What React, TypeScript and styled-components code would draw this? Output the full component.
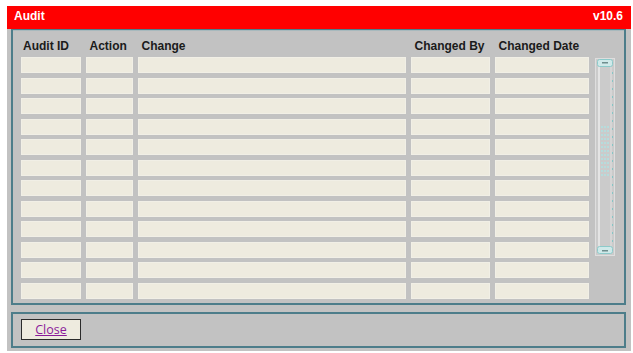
import styled, { createGlobalStyle } from 'styled-components';

const Global = createGlobalStyle`
  html, body {
    margin: 0;
    padding: 0;
    background: #ffffff;
  }
  body {
    padding: 6px 2px 0 7px;
    font-family: "Liberation Sans", Arial, sans-serif;
  }
`;

const Window = styled.div`
  width: 624px;
  height: 345px;
  background: #c2c2c2;
  display: flex;
  flex-direction: column;
`;

const TitleBar = styled.div`
  height: 23px;
  flex: none;
  background: #ff0000;
  color: #ffffff;
  font-weight: bold;
  font-size: 12px;
  display: flex;
  justify-content: space-between;
  align-items: flex-start;
  padding: 3px 8px 0 7px;
  box-sizing: border-box;
`;

const Body = styled.div`
  flex: 1;
  display: flex;
  flex-direction: column;
  gap: 7px;
  padding: 0 5px 3px 4px;
`;

const Panel = styled.div<{ $h: number; $flat?: boolean }>`
  height: ${({ $h }) => $h}px;
  box-sizing: border-box;
  border: 2px solid #4d7d8a;
  ${({ $flat }) =>
    $flat
      ? `border-top-width: 1px; box-shadow: inset 0 1px 0 #a7b9bd;`
      : ''}
  display: flex;
`;

const TableArea = styled.div`
  display: flex;
  gap: 6px;
  padding: 1px 0 0 8px;
`;

const Grid = styled.div`
  display: grid;
  grid-template-columns: 60px 47px 268px 79px 94px;
  grid-template-rows: 21.5px repeat(12, 16px);
  column-gap: 5px;
  row-gap: 4.5px;
`;

const Head = styled.div<{ $first?: boolean }>`
  font-size: 12px;
  font-weight: bold;
  line-height: 14px;
  color: #1b1b1b;
  padding-left: ${({ $first }) => ($first ? 2 : 3.5)}px;
  white-space: nowrap;
  align-self: end;
`;

const Cell = styled.div`
  background: #eeebdf;
  border: 1px solid #f1efe6;
  box-sizing: border-box;
`;

const ScrollWrap = styled.div`
  padding-top: 27px;
`;

const Footer = styled.div`
  padding: 5px 0 0 8px;
`;

const CloseButton = styled.button`
  width: 60px;
  height: 21px;
  border: 1.5px solid #2b2b2b;
  background: #eeebdf;
  color: #8a1a9a;
  text-decoration: underline;
  font-family: "Open Sans", "DejaVu Sans", sans-serif;
  font-size: 12.5px;
  padding: 0;
  cursor: pointer;
  line-height: 17px;
`;

function ScrollTrack() {
  const ticks = [];
  for (let y = 14; y < 186; y += 8) {
    ticks.push(<rect key={y} x={17} y={y} width={1} height={2} fill="#86c6c6" />);
  }
  const dots = [];
  for (let r = 0; r < 13; r++) {
    for (let c = 0; c < 3; c++) {
      dots.push(
        <rect key={`${r}-${c}`} x={6 + c * 3} y={68 + r * 4} width={2} height={2} fill="#b6dcdc" />
      );
    }
  }
  return (
    <svg width="20" height="198" viewBox="0 0 20 198">
      <rect x="0.5" y="0.5" width="19" height="197" fill="#cbcbcb" stroke="#dedede" />
      <rect x="3" y="2" width="2" height="194" fill="#e4e4e4" />
      <rect x="15" y="2" width="2" height="194" fill="#d6d6d6" />
      {ticks}
      {dots}
      <rect x="2.5" y="1.5" width="15" height="7" rx="2" fill="#cfe9e9" stroke="#8ccaca" />
      <rect x="7" y="4" width="6" height="1.5" fill="#6e8e8e" />
      <rect x="2.5" y="188.5" width="15" height="7" rx="2" fill="#cfe9e9" stroke="#8ccaca" />
      <rect x="7" y="192" width="6" height="1.5" fill="#6e8e8e" />
    </svg>
  );
}

const headers = ['Audit ID', 'Action', 'Change', 'Changed By', 'Changed Date'];
const rows = Array.from({ length: 12 }, (_, i) => i);

export default function App() {
  return (
    <>
      <Global />
      <Window>
        <TitleBar>
          <span>Audit</span>
          <span>v10.6</span>
        </TitleBar>
        <Body>
          <Panel $h={276} $flat>
            <TableArea>
              <Grid>
                {headers.map((h, i) => (
                  <Head key={h} $first={i === 0}>
                    {h}
                  </Head>
                ))}
                {rows.map((r) =>
                  headers.map((h) => <Cell key={`${r}-${h}`} />)
                )}
              </Grid>
              <ScrollWrap>
                <ScrollTrack />
              </ScrollWrap>
            </TableArea>
          </Panel>
          <Panel $h={36}>
            <Footer>
              <CloseButton>Close</CloseButton>
            </Footer>
          </Panel>
        </Body>
      </Window>
    </>
  );
}
